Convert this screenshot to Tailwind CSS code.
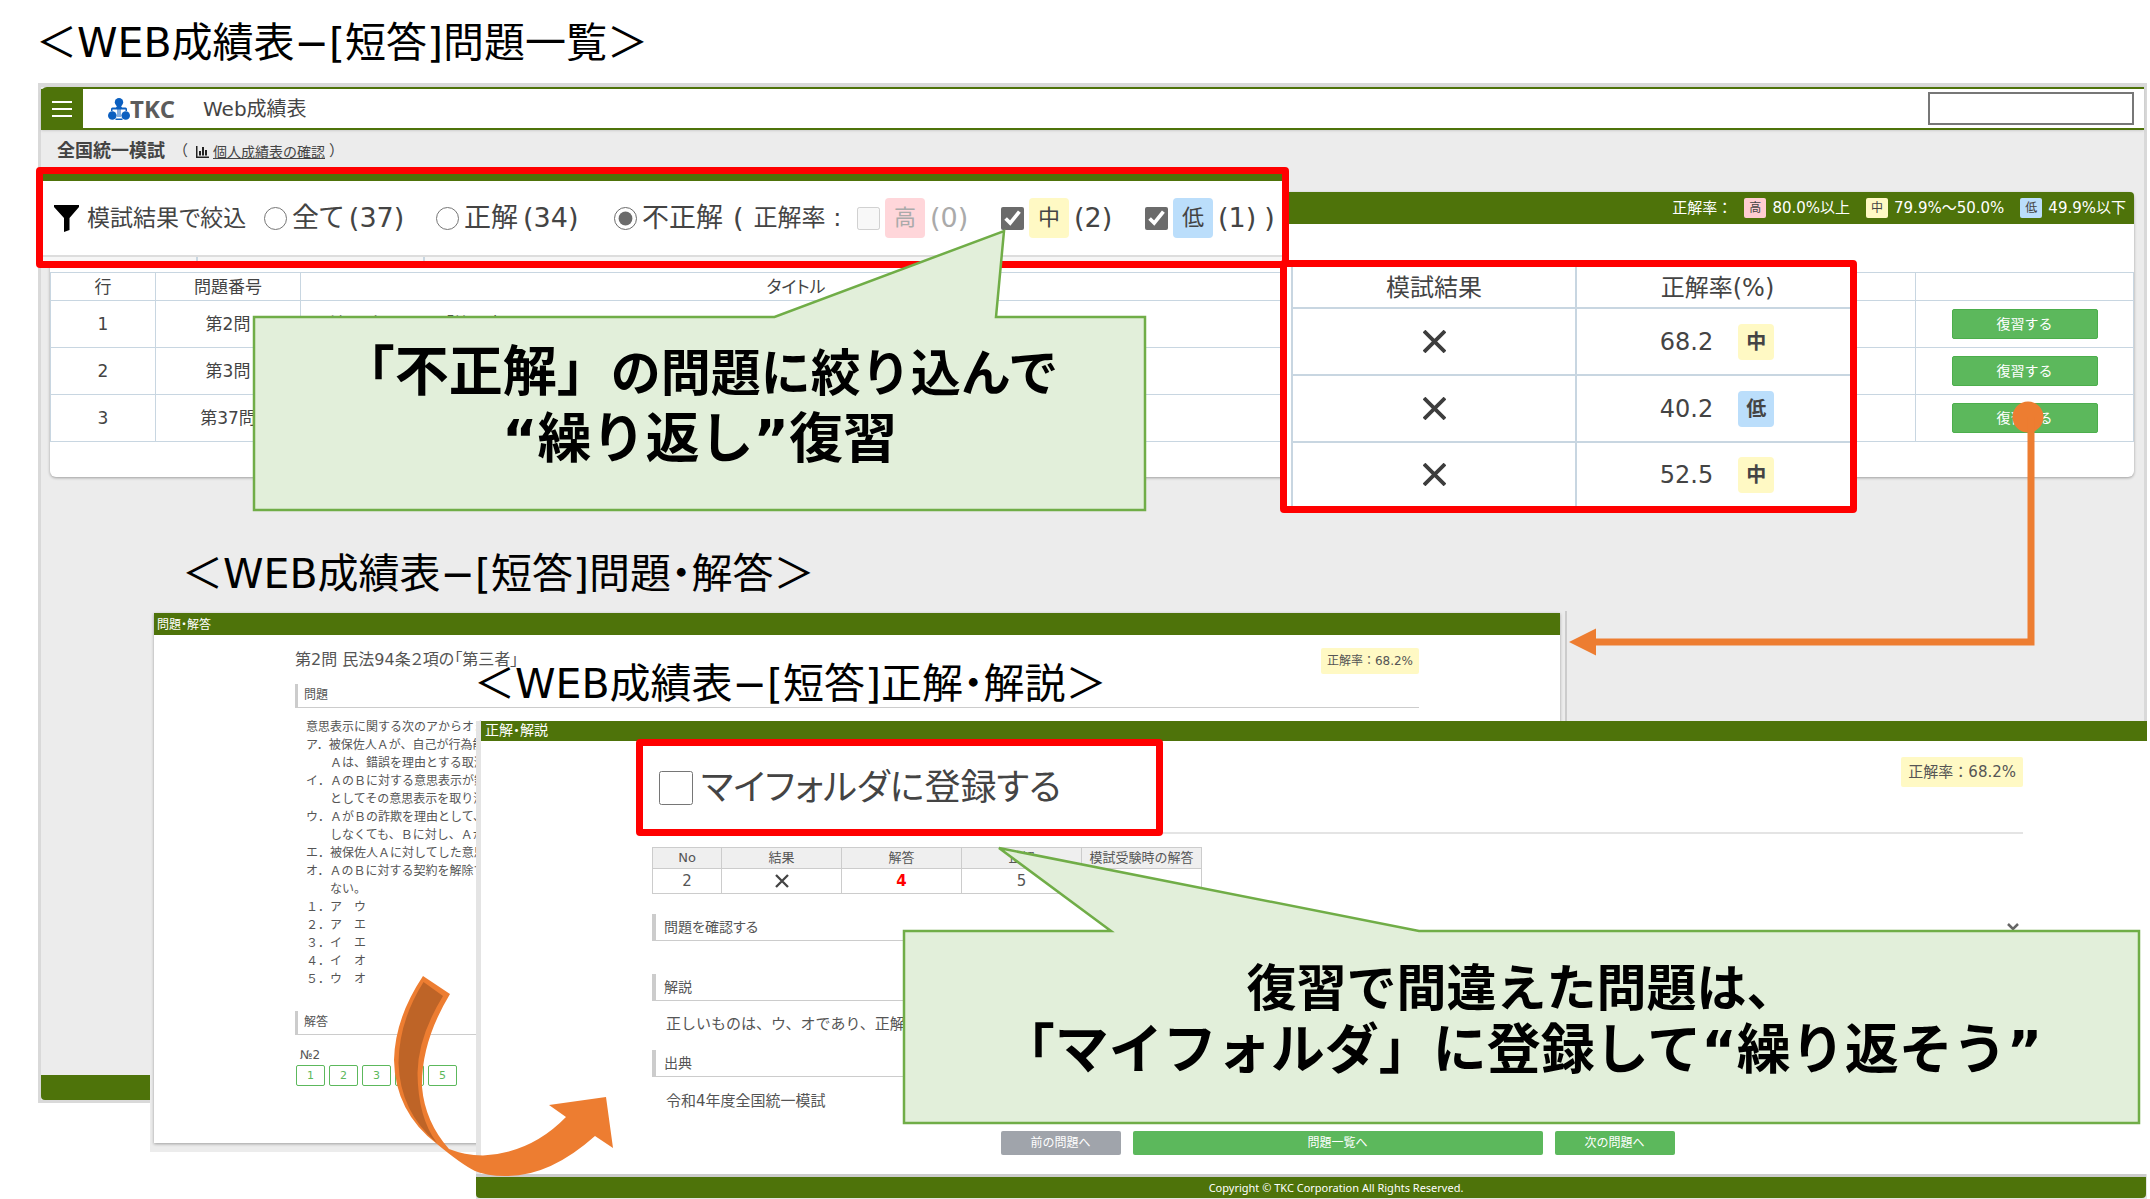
<!DOCTYPE html>
<html lang="ja">
<head>
<meta charset="utf-8">
<title>Web成績表</title>
<script src="https://cdn.jsdelivr.net/npm/@tailwindcss/browser@4"></script>
</head>
<body class="bg-white font-['DejaVu_Sans','Noto_Sans_CJK_JP',sans-serif] text-[#444]">
<div class="relative flex min-h-screen flex-col overflow-hidden whitespace-nowrap">

  <h1 class="h-[83px] shrink-0 pl-9 text-[41px] leading-[86px] text-black [font-feature-settings:'palt']">＜WEB成績表−[短答]問題一覧＞</h1>

  <!-- 問題一覧 -->
  <section class="mr-[3px] mb-24 ml-[38px] flex flex-1 flex-col border-3 border-t-4 border-[#d9d9d9] bg-[#ececec]">
    <header class="flex h-[43px] items-center rounded-tl-md border-t-2 border-b-2 border-[#4e730a] bg-white pr-[10px] shadow">
      <button type="button" aria-label="メニュー" class="flex h-full w-[42px] flex-col items-center justify-center gap-[5px] bg-[#4e730a]">
        <span class="h-[2px] w-5 bg-white"></span><span class="h-[2px] w-5 bg-white"></span><span class="h-[2px] w-5 bg-white"></span>
      </button>
      <svg class="ml-[25px] h-[22px] w-[22px]" viewBox="0 0 22 22" fill="#0b5fc0"><circle cx="11" cy="4.200" r="4.200"/><path d="M9 8h4l1 1.500h3.500q1.500 0 1.500 1.500v2h-1.500v-1.500H12.500V19h-1v-7.500h-1V19h-1v-7.500H4.500V13H3v-2q0-1.500 1.500-1.500H8z"/><path d="M7.500 20.500h7V22h-7z"/><circle cx="4.300" cy="17.500" r="4.300"/><circle cx="17.700" cy="17.500" r="4.300"/></svg>
      <span class="w-[73px] font-['Open_Sans'] text-2xl leading-6 font-bold text-[#5c5c5c]">TKC</span>
      <span class="flex-1 text-xl leading-6 [font-feature-settings:'palt']">Web成績表</span>
      <input type="text" aria-label="検索" class="h-[33px] w-[206px] border-2 border-[#777] bg-white">
    </header>
    <div class="flex h-[62px] items-start pt-[7px] pl-4 text-[15px] leading-[28px]">
      <strong class="text-lg leading-[28px]">全国統一模試</strong>
      <span class="ml-2">（</span>
      <a href="#" class="ml-2 flex h-[30px] items-center text-sm">
        <svg class="mr-1 h-3 w-[13px]" viewBox="0 0 13 12" fill="#222"><path d="M0 0h1.500v10.500H13V12H0zM3 5h2v4.500H3zM6 1h2v8.500H6zM9 4h2v5.500H9z"/></svg><span class="leading-4 underline">個人成績表の確認</span>
      </a>
      <span class="ml-1">）</span>
    </div>
    <div class="mr-[10px] ml-[9px] rounded-md bg-white pb-[35px] shadow-[0_1px_3px_#0005]">
      <div class="flex h-8 items-center justify-end rounded-t bg-[#4e730a] pr-2 text-[15px] leading-5 text-white">
        <span>正解率：</span>
        <span class="ml-3 w-[22px] rounded-xs bg-[#ffcdd2] text-center text-xs leading-5 text-[#444]">高</span><span class="ml-[6px]">80.0%以上</span>
        <span class="ml-4 w-[22px] rounded-xs bg-[#fff9c4] text-center text-xs leading-5 text-[#444]">中</span><span class="ml-[6px]">79.9%～50.0%</span>
        <span class="ml-4 w-[22px] rounded-xs bg-[#bbdefb] text-center text-xs leading-5 text-[#444]">低</span><span class="ml-[6px]">49.9%以下</span>
      </div>
      <table class="mt-12 w-full table-fixed border-collapse text-center text-[17px] leading-6">
        <colgroup><col class="w-[105px]"><col class="w-[145px]"><col><col class="w-[280px]"><col class="w-[344px]"><col class="w-[218px]"></colgroup>
        <thead>
          <tr class="h-7"><th class="border border-[#c8d6e1] font-normal">行</th><th class="border border-[#c8d6e1] font-normal">問題番号</th><th class="border border-[#c8d6e1] font-normal [font-feature-settings:'palt']">タイトル</th><th class="border border-[#c8d6e1]"></th><th class="border border-[#c8d6e1]"></th><th class="border border-[#c8d6e1]"></th></tr>
        </thead>
        <tbody>
          <tr class="h-[47px]"><td class="border border-[#c8d6e1]">1</td><td class="border border-[#c8d6e1]">第2問</td><td class="border border-[#c8d6e1] pl-3 text-left">民法94条２項の「第三者」</td><td class="border border-[#c8d6e1]"></td><td class="border border-[#c8d6e1]"></td><td class="border border-[#c8d6e1]"><button type="button" class="h-[30px] w-[146px] rounded-xs border border-[#4cae4c] bg-[#5cb85c] text-sm leading-5 text-white">復習する</button></td></tr>
          <tr class="h-[47px]"><td class="border border-[#c8d6e1]">2</td><td class="border border-[#c8d6e1]">第3問</td><td class="border border-[#c8d6e1]"></td><td class="border border-[#c8d6e1]"></td><td class="border border-[#c8d6e1]"></td><td class="border border-[#c8d6e1]"><button type="button" class="h-[30px] w-[146px] rounded-xs border border-[#4cae4c] bg-[#5cb85c] text-sm leading-5 text-white">復習する</button></td></tr>
          <tr class="h-[47px]"><td class="border border-[#c8d6e1]">3</td><td class="border border-[#c8d6e1]">第37問</td><td class="border border-[#c8d6e1]"></td><td class="border border-[#c8d6e1]"></td><td class="border border-[#c8d6e1]"></td><td class="border border-[#c8d6e1]"><button type="button" class="h-[30px] w-[146px] rounded-xs border border-[#4cae4c] bg-[#5cb85c] text-sm leading-5 text-white">復習する</button></td></tr>
        </tbody>
      </table>
    </div>
    <footer class="mt-auto h-[25px] rounded-b bg-[#4e730a]"></footer>
  </section>

  <!-- 絞り込み条件の拡大 -->
  <form class="absolute top-[167px] left-9 w-[1253px] rounded border-7 border-[#f00] bg-white">
    <div class="h-[7px] bg-[#4e730a]"></div>
    <div class="grid h-[76px] grid-cols-[210px_172px_178px_119px_124px_144px_144px_1fr] items-center border-b-2 border-[#ddd] pl-[11px] text-[27px] leading-10">
      <span class="flex items-center gap-2 text-[23px] [font-feature-settings:'palt']"><svg class="h-[27px] w-[25px]" viewBox="0 0 25 27"><path fill="#000" d="M0 0h25v2L15.500 13v12L10 27V13L0 2z"/></svg>模試結果で絞込</span>
      <label class="flex items-center gap-[5px] [font-feature-settings:'palt']"><input type="radio" name="result" class="size-[23px] accent-[#6b6b6b]">全て<span>(37)</span></label>
      <label class="flex items-center gap-[5px]"><input type="radio" name="result" class="size-[23px] accent-[#6b6b6b]">正解<span>(34)</span></label>
      <label class="flex items-center gap-[5px]"><input type="radio" name="result" checked class="size-[23px] accent-[#6b6b6b]">不正解</label>
      <span class="flex gap-[10px]">(<span class="text-2xl leading-10 [font-feature-settings:'palt']">正解率 :</span></span>
      <label class="flex items-center text-[#aaa]"><input type="checkbox" disabled class="size-[23px]"><span class="mx-[5px] w-10 rounded-sm bg-[#ffd6da] text-center text-[22px] leading-10">高</span>(0)</label>
      <label class="flex items-center"><input type="checkbox" checked class="size-[23px] accent-[#6b6b6b]"><span class="mx-[5px] w-10 rounded-sm bg-[#fff9c4] text-center text-[22px] leading-10">中</span>(2)</label>
      <label class="flex items-center"><input type="checkbox" checked class="size-[23px] accent-[#6b6b6b]"><span class="mx-[5px] w-10 rounded-sm bg-[#bbdefb] text-center text-[22px] leading-10">低</span>(1)<span class="ml-2">)</span></label>
    </div>
    <div class="grid h-1 grid-cols-[155px_227px_1fr] divide-x-2 divide-[#c8d6e1] bg-[#f6f6f6]"><span></span><span></span><span></span></div>
  </form>

  <!-- 模試結果と正解率の拡大 -->
  <div class="absolute top-[260px] left-[1280px] w-[577px] overflow-hidden rounded border-7 border-[#f00] bg-white pl-1">
    <table class="w-full table-fixed border-collapse text-center text-2xl leading-8">
      <colgroup><col class="w-[284px]"><col></colgroup>
      <thead><tr class="h-[41px]"><th class="border-r-2 border-b-2 border-l-2 border-[#c8d6e1] pt-[2px] font-normal">模試結果</th><th class="border-b-2 border-[#c8d6e1] pt-[2px] pl-2 font-normal">正解率(%)</th></tr></thead>
      <tbody>
        <tr class="h-[67px]"><td class="border-2 border-t-0 border-[#c8d6e1]"><svg aria-label="不正解" class="mx-auto size-[23px]" viewBox="0 0 22 22" stroke="#3d3d3d" stroke-width="3.600"><path d="M1 1l20 20M21 1L1 21"/></svg></td><td class="border-b-2 border-[#c8d6e1] pl-[7px]"><div class="flex items-center justify-center gap-[25px]">68.2<span class="w-9 rounded-sm bg-[#fff9c4] text-xl leading-9 font-bold text-[#444]">中</span></div></td></tr>
        <tr class="h-[67px]"><td class="border-2 border-[#c8d6e1]"><svg aria-label="不正解" class="mx-auto size-[23px]" viewBox="0 0 22 22" stroke="#3d3d3d" stroke-width="3.600"><path d="M1 1l20 20M21 1L1 21"/></svg></td><td class="border-b-2 border-[#c8d6e1] pl-[7px]"><div class="flex items-center justify-center gap-[25px]">40.2<span class="w-9 rounded-sm bg-[#bbdefb] text-xl leading-9 font-bold text-[#444]">低</span></div></td></tr>
        <tr class="h-16"><td class="border-r-2 border-l-2 border-[#c8d6e1]"><svg aria-label="不正解" class="mx-auto size-[23px]" viewBox="0 0 22 22" stroke="#3d3d3d" stroke-width="3.600"><path d="M1 1l20 20M21 1L1 21"/></svg></td><td class="pl-[7px]"><div class="flex items-center justify-center gap-[25px]">52.5<span class="w-9 rounded-sm bg-[#fff9c4] text-xl leading-9 font-bold text-[#444]">中</span></div></td></tr>
      </tbody>
    </table>
  </div>

  <!-- 問題・解答 -->
  <h2 class="absolute top-[549px] left-[182px] text-[41px] leading-[50px] text-black [font-feature-settings:'palt']">＜WEB成績表−[短答]問題・解答＞</h2>
  <section class="absolute top-[611px] left-[150px] h-[541px] w-[1417px] border-r-2 border-[#ccc] bg-[#ececec] pt-[2px] pr-[5px] pl-1 text-xs leading-[18px] text-[#555]">
    <div class="h-[530px] bg-white shadow-[0_1px_3px_#0005]">
      <h3 class="h-[22px] bg-[#4e730a] pl-[3px] leading-6 text-white [font-feature-settings:'palt']">問題・解答</h3>
      <div class="pt-[13px] pr-[141px] pl-[141px]">
        <div class="flex items-start justify-between"><h4 class="pt-[2px] text-base leading-5 [font-feature-settings:'palt']">第2問 民法94条２項の「第三者」</h4><span class="rounded-xs bg-[#fff9c4] px-[6px] leading-[26px]">正解率：68.2%</span></div>
        <h5 class="mt-[10px] border-b border-l-3 border-[#ccc] pl-[6px] leading-[23px]">問題</h5>
        <div class="mt-[10px] pl-[11px] whitespace-pre">意思表示に関する次のアからオま
ア．被保佐人Ａが、自己が行為能
　　Ａは、錯誤を理由とする取消
イ．ＡのＢに対する意思表示が錯
　　としてその意思表示を取り消
ウ．ＡがＢの詐欺を理由として、
　　しなくても、Ｂに対し、Ａが
エ．被保佐人Ａに対してした意思
オ．ＡのＢに対する契約を解除す
　　ない。
１．ア　ウ
２．ア　エ
３．イ　エ
４．イ　オ
５．ウ　オ</div>
        <h5 class="mt-[23px] border-b border-l-3 border-[#ccc] pl-[6px] leading-[23px]">解答</h5>
        <p class="mt-[11px] pl-[5px]">№2</p>
        <div class="mt-px flex gap-1 pl-px text-[11px] text-[#5cb85c]">
          <button type="button" class="h-[21px] w-[29px] rounded-xs border border-[#5cb85c]">1</button>
          <button type="button" class="h-[21px] w-[29px] rounded-xs border border-[#5cb85c]">2</button>
          <button type="button" class="h-[21px] w-[29px] rounded-xs border border-[#5cb85c]">3</button>
          <button type="button" class="h-[21px] w-[29px] rounded-xs border border-[#5cb85c]">4</button>
          <button type="button" class="h-[21px] w-[29px] rounded-xs border border-[#5cb85c]">5</button>
        </div>
      </div>
    </div>
  </section>

  <!-- 正解・解説 -->
  <section class="absolute top-[721px] right-[3px] bottom-0 left-[476px] flex flex-col bg-[#e4e4e4] text-sm leading-5 text-[#555]">
    <div class="ml-[5px] flex-1 bg-white">
      <h3 class="h-5 bg-[#4e730a] pl-1 leading-[18px] text-white [font-feature-settings:'palt']">正解・解説</h3>
      <div class="pt-4 pr-[124px] pl-[171px]">
        <div class="flex h-[77px] items-start justify-end border-b-2 border-[#e4e4e4]"><span class="rounded-xs bg-[#fff9c4] px-[7px] text-[15px] leading-[30px]">正解率：68.2%</span></div>
        <table class="mt-[13px] w-[549px] table-fixed border-collapse text-center text-[13px] leading-4">
          <colgroup><col class="w-[69px]"><col class="w-[120px]"><col class="w-[120px]"><col class="w-[120px]"><col class="w-[120px]"></colgroup>
          <thead><tr class="h-[21px] bg-[#efefef]"><th class="border border-[#ccc] font-normal">No</th><th class="border border-[#ccc] font-normal">結果</th><th class="border border-[#ccc] font-normal">解答</th><th class="border border-[#ccc] font-normal">正解</th><th class="border border-[#ccc] font-normal">模試受験時の解答</th></tr></thead>
          <tbody><tr class="h-[25px] text-[15px]"><td class="border border-[#ccc]">2</td><td class="border border-[#ccc]"><svg aria-label="不正解" class="mx-auto size-[14px]" viewBox="0 0 14 14" stroke="#444" stroke-width="2.300"><path d="M1 1l12 12M13 1L1 13"/></svg></td><td class="border border-[#ccc] font-bold text-[#f00]">4</td><td class="border border-[#ccc]">5</td><td class="border border-[#ccc]"></td></tr></tbody>
        </table>
        <h4 class="mt-5 flex items-center justify-between border-b border-l-4 border-[#ccc] pr-1 pl-2 leading-[26px] [font-feature-settings:'palt']">問題を確認する<svg class="h-2 w-3" viewBox="0 0 12 8" fill="none" stroke="#666" stroke-width="2.500"><path d="M1 1l5 5 5-5"/></svg></h4>
        <h4 class="mt-[33px] border-b border-l-4 border-[#ccc] pl-2 leading-[26px]">解説</h4>
        <p class="mt-[13px] pl-[14px] text-[15px] leading-5">正しいものは、ウ、オであり、正解は</p>
        <h4 class="mt-4 border-b border-l-4 border-[#ccc] pl-2 leading-[26px]">出典</h4>
        <p class="mt-[14px] pl-[14px] text-[15px] leading-5">令和4年度全国統一模試</p>
        <div class="mt-5 flex justify-center gap-3 text-xs leading-5 text-white">
          <button type="button" class="h-6 w-[120px] rounded-xs bg-[#a0a4ab]">前の問題へ</button>
          <button type="button" class="h-6 w-[410px] rounded-xs bg-[#5cb85c]">問題一覧へ</button>
          <button type="button" class="h-6 w-[120px] rounded-xs bg-[#5cb85c]">次の問題へ</button>
        </div>
      </div>
    </div>
    <footer class="mr-px mb-px rounded-b border-t-3 border-[#ccc] bg-[#4e730a] pl-[50px] text-center font-['Noto_Sans'] text-[11px] leading-[21px] text-white">Copyright © TKC Corporation All Rights Reserved.</footer>
  </section>
  <h2 class="absolute top-[659px] left-[474px] text-[41px] leading-[50px] text-black [font-feature-settings:'palt']">＜WEB成績表−[短答]正解・解説＞</h2>

  <label class="absolute top-[739px] left-[636px] flex h-[97px] w-[527px] items-center gap-2 rounded border-7 border-[#f00] bg-white pl-4 text-4xl leading-[50px] [font-feature-settings:'palt']"><input type="checkbox" class="size-[34px]">マイフォルダに登録する</label>

  <!-- 吹き出しと矢印 -->
  <svg class="pointer-events-none absolute top-0 left-0 h-[1199px] w-[2150px]" viewBox="0 0 2150 1199">
    <g fill="#e2efda" stroke="#70ad47" stroke-width="2.500">
      <path d="M254 317H774.500L1004 231 996 317H1145V510H254z"/>
      <path d="M904 931H1111L999 848 1419 931H2139V1123H904z"/>
    </g>
    <ellipse cx="2028" cy="417" rx="15.500" ry="15.500" fill="#ed7d31"/>
    <path d="M2031 417V642H1594" fill="none" stroke="#ed7d31" stroke-width="7"/>
    <path d="M1569 642L1596 628.500V655.500z" fill="#ed7d31"/>
    <path fill="#ed7d31" d="M423 976L450 994Q421 1042 422 1087 425 1122 449 1149 464 1155 483 1155.500 531 1153 566 1117L549 1105 606 1097 613 1148 595 1136Q549 1177 505 1176 487 1176 475 1171 461 1164 437 1144 395 1112 394 1060 395 1018 423 976z"/>
    <path fill="#be6427" d="M423.500 982L443 996Q418 1037 417.500 1073 418 1118 437 1143 400 1112 398.500 1063 399 1021 423.500 982z"/>
  </svg>
  <p class="absolute top-[340px] left-[254px] w-[891px] text-center text-[54px] leading-[65px] font-bold text-black">「不正解」<span class="text-[50px] leading-[65px]">の問題に絞り込んで</span><br>“繰り返し”復習</p>
  <p class="absolute top-[957px] left-[904px] w-[1235px] text-center text-[54px] leading-[62px] font-bold text-black"><span class="text-[50px] leading-[62px]">復習で間違えた問題は、</span><br>「マイフォルダ」に登録して“繰り返そう”</p>
</div>
</body>
</html>
